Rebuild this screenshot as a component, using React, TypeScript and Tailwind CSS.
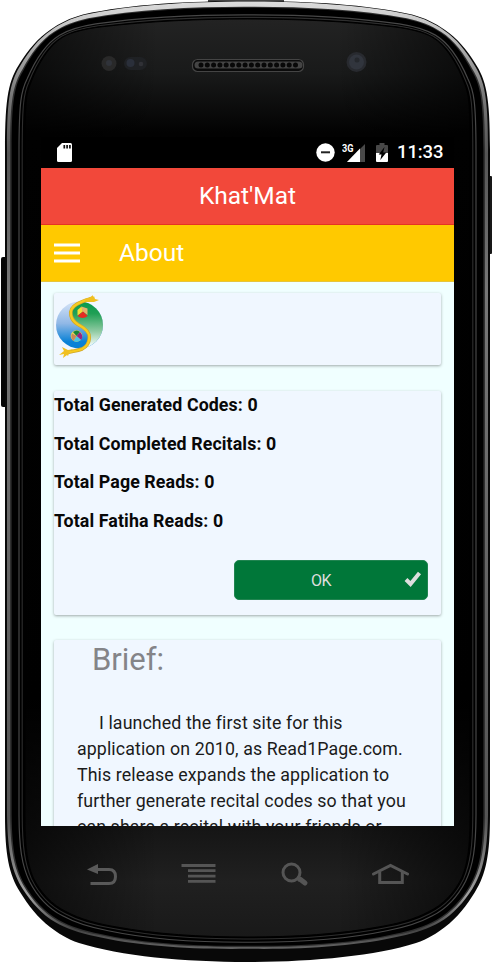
import React from "react";

type Pt = [number, number];

// Left half of the outer shell and of the glass, as bezier points from the middle of the side.
const shellTop: Pt[] = [[5, 150], [5, 95], [9, 80], [20, 63], [28, 50], [38, 38], [50, 30], [60, 23], [70, 18], [83, 14.5], [130, 4], [190, 1], [247.5, 1]];
const glassTop: Pt[] = [[25, 150], [25, 105], [26, 95], [30, 85], [37, 66], [48, 46], [63, 37], [72, 32], [85, 29], [100, 27], [150, 21], [200, 19], [247.5, 19]];
const shellBottom: Pt[] = [[5, 815], [5, 855], [9, 874], [20, 892], [28, 905], [38, 918], [50, 927], [58, 933], [67, 939], [79, 943], [120, 956], [185, 962], [247.5, 962]];
const glassBottom: Pt[] = [[25, 815], [25, 845], [27, 862], [33, 877], [40, 892], [52, 905], [67, 912], [80, 919], [98, 924], [117, 927], [155, 934], [200, 937], [247.5, 937]];

function mix(a: Pt[], b: Pt[], from: number, to: number): Pt[] {
  return a.map((p, i) => {
    const t = from + ((to - from) * i) / (a.length - 1);
    return [p[0] + (b[i][0] - p[0]) * t, p[1] + (b[i][1] - p[1]) * t] as Pt;
  });
}

function contour(top: number, side: number, bottom: number): string {
  const flip = (pts: Pt[]): Pt[] => pts.map(([x, y]) => [495 - x, y] as Pt);
  const up = mix(shellTop, glassTop, side, top);
  const down = mix(shellBottom, glassBottom, side, bottom);
  const curve = (pts: Pt[]) => "C" + pts.slice(1).map((p) => p[0].toFixed(2) + " " + p[1].toFixed(2)).join(" ");
  const right = flip(up).reverse();
  return `M${up[0][0]} ${up[0][1]} ${curve(up)} ${curve(right)} L${495 - down[0][0]} 815 ${curve(flip(down))} ${curve([...down].reverse())}Z`;
}

function PhoneBody() {
  return (
    <svg className="absolute inset-0" width="492" height="963" viewBox="0 0 492 963" aria-hidden="true">
      <defs>
        <linearGradient id="metal" gradientUnits="userSpaceOnUse" x1="0" y1="0" x2="0" y2="963">
          <stop offset="0" stopColor="#dedede" />
          <stop offset=".04" stopColor="#b8b8b8" />
          <stop offset=".1" stopColor="#777" />
          <stop offset=".16" stopColor="#555" />
          <stop offset=".3" stopColor="#777" />
          <stop offset=".85" stopColor="#555" />
          <stop offset=".93" stopColor="#a0a0a0" />
          <stop offset=".965" stopColor="#444" />
          <stop offset="1" stopColor="#777" />
        </linearGradient>
        <linearGradient id="glass" gradientUnits="userSpaceOnUse" x1="0" y1="18" x2="0" y2="937">
          <stop offset="0" stopColor="#232323" />
          <stop offset=".06" stopColor="#191a1a" />
          <stop offset=".125" stopColor="#020202" />
          <stop offset=".74" stopColor="#000" />
          <stop offset=".88" stopColor="#151515" />
          <stop offset=".94" stopColor="#202020" />
          <stop offset="1" stopColor="#191919" />
        </linearGradient>
        <linearGradient id="shade" x1="0" x2="1" y1="0" y2="0">
          <stop offset="0" stopColor="#000" stopOpacity=".6" />
          <stop offset=".3" stopColor="#000" stopOpacity="0" />
          <stop offset=".7" stopColor="#000" stopOpacity="0" />
          <stop offset="1" stopColor="#000" stopOpacity=".6" />
        </linearGradient>
      </defs>
      <rect x="208" y="0" width="76" height="5" fill="#444" />
      <rect x="1" y="257" width="8" height="150" rx="2" fill="#050505" />
      <rect x="484" y="176" width="8" height="78" rx="1" fill="#181818" />
      <path d={contour(0, 0, 0)} fill="#080808" />
      <path d={contour(0.03, 0.1, 0.53)} fill="url(#metal)" />
      <path d={contour(0.32, 0.25, 0.6)} fill="#303030" />
      <path d={contour(0.38, 0.33, 0.65)} fill="#000" />
      <path d={contour(0.77, 0.7, 0.79)} fill="none" stroke="#474747" strokeWidth="1.2" />
      <path d={contour(0.91, 0.86, 0.92)} fill="none" stroke="#2e2e2e" strokeWidth="1.1" />
      <path d={contour(1, 1, 1)} fill="url(#glass)" />
      <path d={contour(1, 1, 1)} fill="url(#shade)" stroke="#000" strokeWidth="1" />
      <circle cx="109" cy="63.500" r="7.500" fill="#292929" />
      <circle cx="109" cy="63" r="3" fill="#30333a" />
      <rect x="124" y="57" width="23" height="13" rx="6.500" fill="#1f2124" />
      <circle cx="130.500" cy="63" r="4" fill="#2a2f3a" />
      <circle cx="141" cy="64" r="2.300" fill="#303136" />
      <rect x="192.500" y="59.500" width="111" height="12" rx="5" fill="#0b0b0b" stroke="#444" strokeWidth="1.200" />
      <path d="M198 65h101" stroke="#444" strokeWidth="7" strokeLinecap="round" />
      <path d="M201 65h96" stroke="#080808" strokeWidth="5" strokeLinecap="round" strokeDasharray="0 6.300" />
      <circle cx="356.500" cy="62" r="10" fill="#282a2f" />
      <circle cx="356.500" cy="62" r="7.500" fill="#31353d" />
      <circle cx="357" cy="60" r="2.500" fill="#25282d" />
    </svg>
  );
}

function StatusBar() {
  return (
    <div className="flex h-[31px] items-center bg-black pl-[16px] pr-[11px] text-white">
      <svg width="15" height="19" viewBox="0 0 15 19">
        <path d="M5 0h8.500Q15 0 15 1.500v16q0 1.500-1.500 1.500h-12Q0 19 0 17.500V5z" fill="#fff" />
        <path d="M7.300 2v3.500M10.100 2v3.500M12.900 2v3.500" stroke="#111" strokeWidth="1.700" />
      </svg>
      <svg className="ml-auto" width="19" height="19" viewBox="0 0 19 19">
        <circle cx="9.500" cy="9.500" r="9.200" fill="#fff" />
        <path d="M5 9.300h9" stroke="#222" strokeWidth="2" />
      </svg>
      <svg className="ml-[7px]" width="23" height="20" viewBox="0 0 23 20">
        <path d="M23 1v18H5z" fill="#494949" />
        <path d="M18 5.500V19H5z" fill="#fff" />
        <path d="M0 0h12v10H0z" fill="#000" />
        <text x="0" y="9" fill="#fff" fontFamily="Roboto, sans-serif" fontSize="10" fontWeight="700" textLength="11.500" lengthAdjust="spacingAndGlyphs">3G</text>
      </svg>
      <svg className="ml-[11px]" width="12" height="19" viewBox="0 0 12 19">
        <path d="M0 3q0-1 1-1h2.500V0h5v2H11q1 0 1 1v7H0z" fill="#484848" />
        <path d="M0 10h12v8q0 1-1 1H1q-1 0-1-1z" fill="#fff" />
        <path d="M8.500 4L2.700 11.500h2.800L4.300 17l6-7.500H7.200z" fill="#000" />
      </svg>
      <span className="ml-[9px] w-[46px] whitespace-nowrap text-[18.5px] font-medium leading-[31px] tracking-[-0.1px]">11:33</span>
    </div>
  );
}

function Logo() {
  const spine = "M38 4C31 6 27 7 21.700 10.300C17 13 15 17 16 21.500C17 26 19 28 23 30.500C30 34 35 38 34.300 44C34 50 31 53 27 55C22 57 18 57 12 58.500";
  return (
    <svg width="50" height="66" viewBox="0 0 50 66" className="block">
      <defs>
        <linearGradient id="blue" x1="0" x2="0" y1="0" y2="1">
          <stop offset=".1" stopColor="#c9dcf4" />
          <stop offset=".45" stopColor="#91b8e6" />
          <stop offset=".8" stopColor="#0b82d6" />
          <stop offset="1" stopColor="#087ed3" />
        </linearGradient>
        <linearGradient id="green" x1="0" x2="0" y1="0" y2="1">
          <stop offset="0" stopColor="#009a4a" />
          <stop offset=".3" stopColor="#209f55" />
          <stop offset=".65" stopColor="#93cca5" />
          <stop offset=".9" stopColor="#edf8f5" />
        </linearGradient>
        <clipPath id="disc">
          <circle cx="24.500" cy="31" r="23.500" />
        </clipPath>
      </defs>
      <g clipPath="url(#disc)">
        <path d="M0 6h50v52H0z" fill="url(#blue)" />
        <path d="M38 4C31 6 27 7 21.700 10.300C17 13 15 17 16 21.500C17 26 19 28 23 30.500C30 34 35 38 34.300 44C34 50 31 53 27 55L50 56V4z" fill="url(#green)" />
      </g>
      <path d={spine} fill="none" stroke="#cfa62a" strokeWidth="3.600" />
      <path d={spine} fill="none" stroke="#f6cb20" strokeWidth="2.200" />
      <path d="M29 5l5-1 3-2 0-1 2 2 0-1 1 3 4 1-5 2-8 0z M19 55l-6 1-6-3 2 4-5 4 5-1-1 4 4-3 1 1 2-5z" fill="#f0c020" />
      <path d="M22.500 16l4-3.500 1.500 5-5.500 4z" fill="#f2dd35" />
      <path d="M26.500 12.500l6 2v6.500l-5-3.500z" fill="#e3b36d" />
      <path d="M22.500 22l5.500-4.500 4.700 4.500q-5 4-10.200 0z" fill="#e62b22" />
      <circle cx="21.500" cy="42" r="5.800" fill="#e8d75a" />
      <path d="M21.500 42L18 38q4-3 7 0z" fill="#16843b" />
      <path d="M21.500 42L25 38q4 4 1 8z" fill="#982285" />
      <path d="M21.500 42l4.500 4q-4 3-7.500 1z" fill="#48c4e8" />
      <path d="M21.500 42L17 39.500q-2 4 1.500 7.500z" fill="#c98a5c" />
    </svg>
  );
}

function Card({ className, children }: { className: string; children: React.ReactNode }) {
  return <section className={`mx-[13px] shrink-0 rounded-[2px] bg-[#f0f7ff] shadow-[0_1px_3px_rgba(0,0,0,0.34)] ${className}`}>{children}</section>;
}

const totals = ["Total Generated Codes: 0", "Total Completed Recitals: 0", "Total Page Reads: 0", "Total Fatiha Reads: 0"];
const brief = ["I launched the first site for this", "application on 2010, as Read1Page.com.", "This release expands the application to", "further generate recital codes so that you", "can share a recital with your friends or"];

function NavKeys() {
  return (
    <nav className="flex h-[137px] items-start pl-[45px] pt-[35px]">
      <svg width="32" height="30" viewBox="0 0 32 30" fill="none" stroke="#595959" strokeWidth="3">
        <path d="M11 8.500h12q6.500 0 6.500 7t-6.500 7H4.500" />
        <path d="M1 8.500l11-5.500v10z" fill="#595959" stroke="none" />
      </svg>
      <svg className="ml-[62px]" width="36" height="30" viewBox="0 0 36 30" stroke="#555" strokeWidth="2.800">
        <path d="M1.500 4.500h34M8 9.700h27.500M8 15.200h27.500M8 20.300h27.500" />
      </svg>
      <svg className="ml-[65px]" width="30" height="30" viewBox="0 0 30 30" fill="none" stroke="#555">
        <circle cx="10.500" cy="11.500" r="8.500" strokeWidth="3" />
        <path d="M16 17l3 3" strokeWidth="3" />
        <path d="M19.500 18.500l4.500 3.500" strokeWidth="5" strokeLinecap="round" />
      </svg>
      <svg className="ml-[60px]" width="38" height="30" viewBox="0 0 38 30" fill="none" stroke="#555" strokeWidth="3">
        <path d="M2.500 13L19.500 4.500l17 8.500" strokeLinecap="round" />
        <path d="M8.700 11v10.500h22.600V11" />
      </svg>
    </nav>
  );
}

export default function App() {
  return (
    <main className="relative h-[963px] w-[492px] overflow-hidden bg-white font-['Roboto',sans-serif]">
      <PhoneBody />
      <div className="relative flex h-full flex-col pl-[41px] pr-[38px] pt-[137px]">
        <StatusBar />
        <div className="flex h-[658px] shrink-0 flex-col overflow-hidden bg-[#f0ffff]">
          <header className="flex h-[57px] shrink-0 items-center justify-center border-b border-[#e53223] bg-[#f2483a] text-white">
            <h1 className="text-[24.5px] font-normal leading-[54px]">Khat'Mat</h1>
          </header>
          <div className="flex h-[57px] shrink-0 items-center border-b border-[#e6c53c] bg-[#ffc900] pl-[13px] text-white">
            <svg width="26" height="20" viewBox="0 0 26 20" stroke="#fff" strokeWidth="2.800">
              <path d="M0 2h26M0 10h26M0 18h26" />
            </svg>
            <h2 className="ml-[39px] text-[24.5px] font-normal leading-[56px]">About</h2>
          </div>
          <Card className="mt-[11px] h-[72px] pl-[1px] pt-[1px]">
            <Logo />
          </Card>
          <Card className="mt-[26px] flex h-[224px] flex-col">
            <ul className="text-[17.8px] font-bold leading-[28px] tracking-[0.1px] text-[#080808]">
              {totals.map((line) => (
                <li key={line} className="mb-[10.7px] whitespace-nowrap">{line}</li>
              ))}
            </ul>
            <button className="mr-[13px] mt-[14.5px] flex h-[40px] w-[194px] items-center self-end rounded-[5px] border border-[#208450] bg-[#007739] text-[#dedede]">
              <span className="ml-[76px] pt-px text-[16px] tracking-[-0.6px]">OK</span>
              <svg className="ml-auto mr-[5px]" width="18" height="18" viewBox="0 0 18 18">
                <path d="M2 8.500l4.500 4.500L15.500 2" fill="none" stroke="#dedede" strokeWidth="4" />
              </svg>
            </button>
          </Card>
          <Card className="mt-[25px] h-[260px]">
            <h3 className="ml-[38px] pt-px text-[31px] font-normal leading-[38px] text-[#848488]">Brief:</h3>
            <p className="ml-[23px] mt-[31px] whitespace-nowrap text-[17.8px] leading-[26px] tracking-[0.1px] text-[#1b1b1b]">
              {brief.map((line, i) => (
                <span key={line} className={i === 0 ? "block pl-[22px]" : "block"}>{line}</span>
              ))}
            </p>
          </Card>
        </div>
        <NavKeys />
      </div>
    </main>
  );
}
